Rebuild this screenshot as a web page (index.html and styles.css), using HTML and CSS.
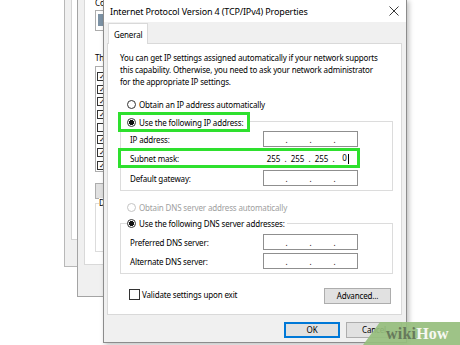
FILE: index.html
```html
<!DOCTYPE html>
<html>
    <head>
        <title>Internet Protocol Version 4 (TCP/IPv4) Properties</title>
        <meta charset="UTF-8">
        <link rel="stylesheet" href="styles.css">
    </head>
    <body>
        <div class="desk">
            <div class="win win-a">
                <div class="win-a-panel"></div>
            </div>

            <div class="win win-b">
                <div class="win-b-panel">
                    <div class="b-label">Co</div>
                    <div class="b-adapter"><span class="b-icon"></span></div>
                    <div class="b-label b-items">Th</div>
                    <div class="b-list">
                        <div class="b-row"><span class="b-check">&#10003;</span></div>
                        <div class="b-row"><span class="b-check">&#10003;</span></div>
                        <div class="b-row"><span class="b-check">&#10003;</span></div>
                        <div class="b-row"><span class="b-check">&#10003;</span></div>
                        <div class="b-row"><span class="b-check"></span></div>
                        <div class="b-row"><span class="b-check">&#10003;</span></div>
                        <div class="b-row"><span class="b-check">&#10003;</span></div>
                        <div class="b-row"><span class="b-check">&#10003;</span></div>
                    </div>
                    <div class="b-btn"></div>
                    <div class="b-group"><span class="b-legend">D</span></div>
                </div>
            </div>

            <div class="dialog">
                <div class="titlebar">
                    <span class="title">Internet Protocol Version 4 (TCP/IPv4) Properties</span>
                    <svg class="close" width="10" height="10" viewBox="0 0 10 10">
                        <path d="M0.5 0.5 L9.5 9.5 M9.5 0.5 L0.5 9.5" stroke="#222" stroke-width="0.9" fill="none"/>
                    </svg>
                </div>
                <div class="dlg-body">
                    <div class="tab">General</div>
                    <div class="panel">
                        <p class="intro">You can get IP settings assigned automatically if your network supports<br>this capability. Otherwise, you need to ask your network administrator<br>for the appropriate IP settings.</p>

                        <div class="option opt-auto"><span class="radio"></span>Obtain an IP address automatically</div>

                        <div class="group ip-group">
                            <div class="legend hl"><span class="radio on"></span>Use the following IP address:</div>
                            <div class="field field-ip">
                                <span class="label">IP address:</span>
                                <div class="ip"><span class="seg"></span><span class="dot">.</span><span class="seg"></span><span class="dot">.</span><span class="seg"></span><span class="dot">.</span><span class="seg"></span></div>
                            </div>
                            <div class="field hl field-mask">
                                <span class="label">Subnet mask:</span>
                                <div class="ip ip-mask"><span class="seg">255</span><span class="dot">.</span><span class="seg">255</span><span class="dot">.</span><span class="seg">255</span><span class="dot">.</span><span class="seg">0<span class="caret"></span></span></div>
                            </div>
                            <div class="field field-gw">
                                <span class="label">Default gateway:</span>
                                <div class="ip"><span class="seg"></span><span class="dot">.</span><span class="seg"></span><span class="dot">.</span><span class="seg"></span><span class="dot">.</span><span class="seg"></span></div>
                            </div>
                        </div>

                        <div class="option disabled"><span class="radio"></span>Obtain DNS server address automatically</div>

                        <div class="group dns-group">
                            <div class="legend"><span class="radio on"></span>Use the following DNS server addresses:</div>
                            <div class="field field-dns1">
                                <span class="label">Preferred DNS server:</span>
                                <div class="ip"><span class="seg"></span><span class="dot">.</span><span class="seg"></span><span class="dot">.</span><span class="seg"></span><span class="dot">.</span><span class="seg"></span></div>
                            </div>
                            <div class="field field-dns2">
                                <span class="label">Alternate DNS server:</span>
                                <div class="ip"><span class="seg"></span><span class="dot">.</span><span class="seg"></span><span class="dot">.</span><span class="seg"></span><span class="dot">.</span><span class="seg"></span></div>
                            </div>
                        </div>

                        <div class="bottom-row">
                            <div class="check"><span class="box"></span>Validate settings upon exit</div>
                            <div class="btn btn-adv">Advanced...</div>
                        </div>
                    </div>
                    <div class="footer">
                        <div class="btn btn-ok">OK</div>
                        <div class="btn">Cancel</div>
                    </div>
                </div>
            </div>

            <div class="wikihow"><span class="wiki">wiki</span><span class="how">How</span></div>
        </div>
    </body>
</html>
```
FILE: styles.css
```css
body {
    margin: 0;
    background: #fff;
    font-family: "Noto Sans", "Open Sans", sans-serif;
    font-size: 8px;
    letter-spacing: -0.15px;
    color: #000;
}
.desk {
    position: relative;
    width: 460px;
    height: 345px;
    overflow: hidden;
}

/* windows behind the dialog, only their left strips show */
.win {
    position: absolute;
    box-sizing: border-box;
    background: #f0f0f0;
    overflow: hidden;
}
.win-a {
    left: 64px;
    top: -10px;
    width: 40px;
    height: 277px;
    border: 1px solid #b8b8b8;
    border-right: 0;
    padding-left: 6px;
}
.win-a-panel {
    height: 247px;
    background: #fff;
    border: 1px solid #d4d4d4;
    border-right: 0;
}
.win-b {
    left: 77px;
    top: -10px;
    width: 32px;
    height: 307px;
    border: 1px solid #a4a4a4;
    border-right: 0;
    padding-left: 6px;
}
.win-b-panel {
    box-sizing: border-box;
    height: 274px;
    background: #fff;
    border: 1px solid #d9d9d9;
    border-right: 0;
    padding: 6px 0 0 10px;
    white-space: nowrap;
}
.b-label {
    line-height: 10px;
}
.b-adapter {
    margin-top: 2px;
    height: 21px;
    box-sizing: border-box;
    border: 1px solid #adadad;
    border-right: 0;
    padding: 3px 2px;
}
.b-icon {
    display: block;
    width: 8px;
    height: 12px;
    background: #7d93a6;
}
.b-items {
    margin-top: 22px;
}
.b-list {
    margin-top: 3px;
    height: 106px;
    box-sizing: border-box;
    border: 1px solid #adadad;
    border-right: 0;
    padding: 3px 0 0 1px;
}
.b-row {
    display: flex;
    align-items: center;
    height: 12.7px;
}
.b-check {
    width: 7px;
    height: 7px;
    border: 1px solid #333;
    font-size: 7px;
    line-height: 7px;
    text-align: center;
}
.b-btn {
    margin-top: 11px;
    height: 16px;
    box-sizing: border-box;
    background: #e1e1e1;
    border: 1px solid #adadad;
    border-right: 0;
}
.b-group {
    margin-top: 4px;
    height: 49px;
    box-sizing: border-box;
    border: 1px solid #dcdcdc;
    border-right: 0;
}
.b-legend {
    display: inline-block;
    margin: -6px 0 0 3px;
    background: #fff;
    line-height: 10px;
    vertical-align: top;
}

/* main dialog */
.dialog {
    position: absolute;
    left: 103px;
    top: -1px;
    width: 304px;
    box-sizing: border-box;
    background: #f0f0f0;
    border: 1px solid #8c8c8c;
    box-shadow: 2px 2px 5px rgba(0, 0, 0, 0.25);
    white-space: nowrap;
}
.titlebar {
    height: 22px;
    background: #fff;
    display: flex;
    align-items: center;
    justify-content: space-between;
    padding: 0 7px 0 6px;
}
.title {
    font-size: 9px;
}
.close {
    display: block;
}
.dlg-body {
    padding: 1px 4px 4px 3px;
}
.tab {
    position: relative;
    z-index: 1;
    width: 40px;
    height: 21px;
    box-sizing: border-box;
    margin: 0 0 -1px 1px;
    padding-left: 5px;
    background: #fff;
    border: 1px solid #d9d9d9;
    border-bottom: 0;
    line-height: 22px;
}
.panel {
    background: #fff;
    border: 1px solid #d9d9d9;
    padding: 8px 8px 10px 12px;
}
.intro {
    margin: 0;
    line-height: 12px;
}
.option {
    display: flex;
    align-items: center;
    height: 12px;
    margin: 10px 0 0 7px;
}
.disabled {
    color: #a0a0a0;
}
.radio {
    width: 9px;
    height: 9px;
    box-sizing: border-box;
    border: 1px solid #333;
    border-radius: 50%;
    background: #fff;
    margin-right: 3px;
    flex: none;
}
.radio.on {
    background: radial-gradient(circle, #111 0 2.3px, #fff 2.8px);
}
.disabled .radio {
    border-color: #c4c4c4;
}
.hl {
    border: 3px solid #2ee02e;
}
.group {
    border: 1px solid #dcdcdc;
    padding-bottom: 4px;
}
.ip-group {
    margin-top: 11px;
}
.dns-group {
    margin-top: 10px;
}
.legend {
    display: flex;
    align-items: center;
    width: fit-content;
    background: #fff;
    position: relative;
}
.ip-group .legend {
    height: 20px;
    box-sizing: border-box;
    margin: -10px 0 0 -3px;
    padding: 0 4px 0 6px;
}
.dns-group .legend {
    height: 12px;
    margin: -7px 0 0 6px;
    padding-right: 2px;
}
.field {
    display: flex;
    align-items: center;
    justify-content: space-between;
    height: 16px;
    box-sizing: border-box;
    padding: 0 34px 0 9px;
}
.field-ip {
    margin-top: -1px;
}
.field-mask {
    height: 20px;
    width: 242px;
    margin: 1px 0 0 -3px;
    padding: 0 0 0 9px;
}
.field-gw {
    margin-top: 2px;
}
.field-dns1 {
    margin-top: 5px;
}
.field-dns2 {
    margin-top: 3px;
}
.ip {
    display: flex;
    width: 95px;
    height: 16px;
    box-sizing: border-box;
    border: 1px solid #8f8f8f;
    align-items: center;
}
.ip-mask {
    height: 14px;
    border-color: transparent;
}
.seg {
    flex: 1;
    text-align: center;
}
.dot {
    width: 3px;
    text-align: center;
}
.caret {
    display: inline-block;
    width: 1px;
    height: 10px;
    background: #000;
    vertical-align: middle;
    margin-left: 1px;
}
.bottom-row {
    display: flex;
    justify-content: space-between;
    align-items: flex-start;
    margin-top: 14px;
}
.check {
    display: flex;
    align-items: center;
    height: 12px;
    margin-left: 9px;
}
.box {
    width: 11px;
    height: 11px;
    box-sizing: border-box;
    border: 1px solid #333;
    margin-right: 2px;
}
.btn {
    width: 56px;
    height: 16px;
    box-sizing: border-box;
    background: #e1e1e1;
    border: 1px solid #adadad;
    text-align: center;
    line-height: 14px;
}
.btn-adv {
    width: 67px;
    margin-right: 2px;
}
.btn-ok {
    border-color: #0078d7;
    box-shadow: inset 0 0 0 1px #0078d7;
}
.footer {
    display: flex;
    justify-content: flex-end;
    gap: 6px;
    padding-top: 7px;
}

/* watermark */
.wikihow {
    position: absolute;
    right: 0;
    bottom: 0;
    width: 97px;
    height: 23px;
    box-sizing: border-box;
    padding-left: 23px;
    background: rgba(150, 190, 125, 0.92);
    clip-path: polygon(17px 0, 100% 0, 100% 100%, 0 100%);
    font-family: "Liberation Serif", serif;
    font-weight: bold;
    font-size: 16px;
    letter-spacing: 0.2px;
    line-height: 24px;
}
.wiki {
    color: #67795b;
}
.how {
    color: #f6f8f2;
}
```
